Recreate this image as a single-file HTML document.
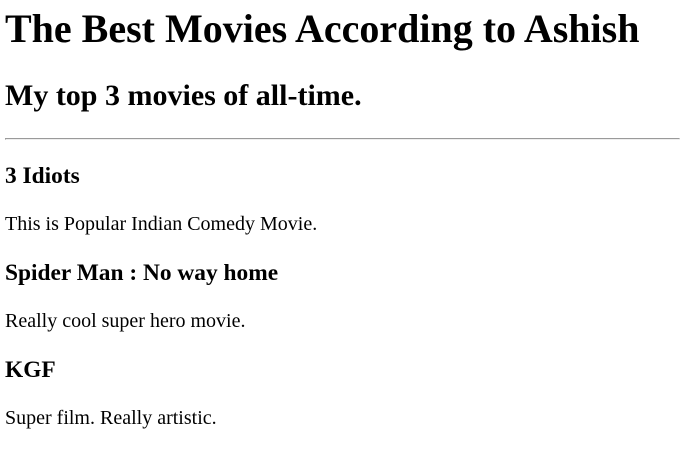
<!DOCTYPE html>
<html><head><meta charset="utf-8"><style>
html,body{background:#fff;}
body{margin:4px 0 0 4px;zoom:1.25;font-family:"Liberation Serif",serif;color:#000;}
h1{margin-top:0;}
hr{margin-right:0;}
</style></head><body>
<h1>The Best Movies According to Ashish</h1>
<h2>My top 3 movies of all-time.</h2>
<hr>
<h3>3 Idiots</h3>
<p>This is Popular Indian Comedy Movie.</p>
<h3>Spider Man : No way home</h3>
<p>Really cool super hero movie.</p>
<h3>KGF</h3>
<p>Super film. Really artistic.</p>
</body></html>
